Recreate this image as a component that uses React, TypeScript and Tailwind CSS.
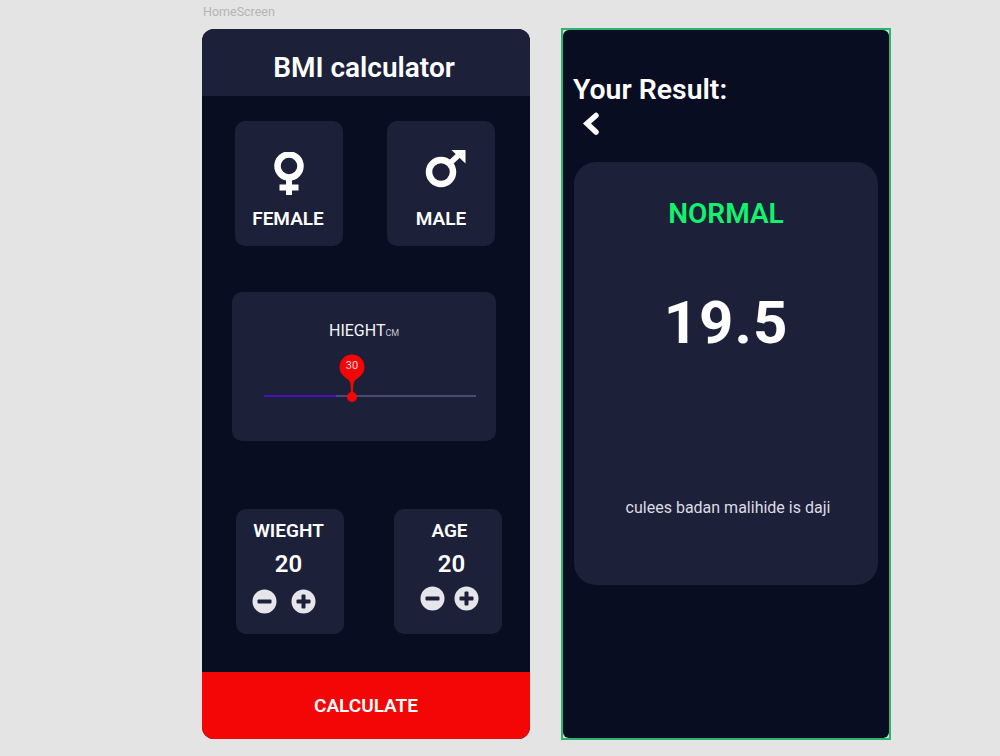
import React from "react";

const font = { fontFamily: "Roboto, 'Liberation Sans', sans-serif" };

function Circle({ plus }: { plus?: boolean }) {
  return (
    <svg width="25" height="25" viewBox="0 0 25 25" className="block">
      <circle cx="12.5" cy="12.5" r="12" fill="#e6e6ea" />
      <rect x="5.5" y="10.5" width="14" height="4" rx="1" fill="#1d2039" />
      {plus && <rect x="10.5" y="5.5" width="4" height="14" rx="1" fill="#1d2039" />}
    </svg>
  );
}

function Female() {
  return (
    <svg width="32" height="44" viewBox="0 0 32 44" className="block">
      <circle cx="16" cy="14" r="11.5" fill="none" stroke="#fff" strokeWidth="6.5" />
      <rect x="13" y="26" width="6" height="17" fill="#fff" />
      <rect x="6.5" y="32.5" width="19" height="6" fill="#fff" />
    </svg>
  );
}

function Male() {
  return (
    <svg width="44" height="40" viewBox="0 0 44 40" className="block">
      <circle cx="17" cy="24" r="12" fill="none" stroke="#fff" strokeWidth="6.5" />
      <path d="M25 16 L37 5" stroke="#fff" strokeWidth="5.5" fill="none" />
      <path d="M27.5 2 H41.5 V15.5 Z" fill="#fff" />
    </svg>
  );
}

export default function App() {
  return (
    <div className="relative w-[1000px] h-[756px] overflow-hidden bg-[#e4e4e4]" style={font}>
      <div className="flex pl-[202px] h-full">
        <div className="flex flex-col w-[328px]">
          <div className="h-[29px] pl-px pt-[4px] text-[12.5px] leading-[15px] text-[#b4b4b4]">HomeScreen</div>
          <div className="flex flex-col w-[328px] h-[710px] rounded-[12px] overflow-hidden bg-[#090d21]">
            <div className="h-[67px] flex items-center justify-center bg-[#1d2039] text-white text-[28px] font-semibold pt-[10px] pr-[4px]">
              BMI calculator
            </div>

            <div className="flex gap-[44px] pl-[33px] mt-[25px]">
              <div className="w-[108px] h-[125px] rounded-[10px] bg-[#1d2039] flex flex-col items-center">
                <div className="h-[44px] mt-[31px] flex items-center">
                  <Female />
                </div>
                <div className="mt-[12px] mr-[2px] text-[19px] leading-[22px] font-semibold text-white">FEMALE</div>
              </div>
              <div className="w-[108px] h-[125px] rounded-[10px] bg-[#1d2039] flex flex-col items-center">
                <div className="h-[44px] mt-[25px] ml-[10px] flex items-center">
                  <Male />
                </div>
                <div className="mt-[18px] text-[19px] leading-[22px] font-semibold text-white">MALE</div>
              </div>
            </div>

            <div className="ml-[30px] mt-[46px] w-[264px] h-[149px] rounded-[10px] bg-[#1d2039] flex flex-col">
              <div className="mt-[29px] pl-[97px] text-[16px] leading-[20px] text-[#f6f6fa] whitespace-nowrap">
                HIEGHT<span className="text-[9px] leading-[8px] text-[#c4c4d0]">CM</span>
              </div>
              <div className="relative mt-[54px] ml-[32px] w-[212px] h-[2px] bg-[#4b4b6f]">
                <div className="w-[72px] h-[2px] bg-[#4a0fb8]" />
                <svg width="28" height="48" viewBox="0 0 28 48" className="absolute left-[74px] top-[-41px]">
                  <path d="M14 0.5 C21 0.5 26.5 6 26.5 13 C26.5 19 22 23 18 25.5 C15.5 27.5 15.2 30 15 40 H13 C12.8 30 12.5 27.5 10 25.5 C6 23 1.5 19 1.5 13 C1.5 6 7 0.5 14 0.5 Z" fill="#f50606" />
                  <circle cx="14" cy="43" r="5" fill="#f50606" />
                </svg>
                <div className="absolute left-[74px] top-[-36px] w-[28px] text-center text-[11px] leading-[13px] text-[#ffd8d8]">30</div>
              </div>
            </div>

            <div className="flex gap-[50px] pl-[34px] mt-[68px]">
              <div className="w-[108px] h-[125px] rounded-[10px] bg-[#1d2039] flex flex-col items-center">
                <div className="mt-[11px] mr-[3px] text-[19px] leading-[22px] font-semibold text-white">WIEGHT</div>
                <div className="mt-[8px] mr-[3px] text-[24px] leading-[28px] font-semibold text-white">20</div>
                <div className="mt-[11px] flex gap-[14px] mr-[12px]">
                  <Circle />
                  <Circle plus />
                </div>
              </div>
              <div className="w-[108px] h-[125px] rounded-[10px] bg-[#1d2039] flex flex-col items-center">
                <div className="mt-[11px] ml-[3px] text-[19px] leading-[22px] font-semibold text-white">AGE</div>
                <div className="mt-[8px] ml-[7px] text-[24px] leading-[28px] font-semibold text-white">20</div>
                <div className="mt-[8px] flex gap-[9px] ml-[2px]">
                  <Circle />
                  <Circle plus />
                </div>
              </div>
            </div>

            <div className="mt-auto h-[67px] bg-[#f50606] flex items-center justify-center text-white text-[19px] font-semibold pt-[2px]">
              CALCULATE
            </div>
          </div>
        </div>

        <div className="ml-[31px] mt-[28px] w-[330px] h-[712px] bg-[#bfe8cf] border-2 border-[#2fb46c]">
          <div className="h-full rounded-[6px] bg-[#090d21] flex flex-col">
            <div className="mt-[42px] ml-[10px] text-[28.4px] leading-[36px] font-semibold text-white whitespace-nowrap">Your Result:</div>
            <svg width="18" height="24" viewBox="0 0 18 24" className="block ml-[19px] mt-[4px]">
              <path d="M14 3.5 L5 11.5 L14 20" fill="none" stroke="#fff" strokeWidth="5.5" strokeLinecap="round" />
            </svg>
            <div className="ml-[11px] mt-[26px] w-[304px] h-[423px] rounded-[22px] bg-[#1d2039] flex flex-col items-center">
              <div className="mt-[34px] text-[28px] leading-[36px] font-semibold text-[#12f26e]">NORMAL</div>
              <div className="mt-[53px] text-[60px] leading-[76px] font-bold tracking-[1px] text-white">19.5</div>
              <div className="mt-[137px] ml-[4px] text-[16px] leading-[20px] text-[#dcdce4]">culees badan malihide is daji</div>
            </div>
          </div>
        </div>
      </div>
    </div>
  );
}
